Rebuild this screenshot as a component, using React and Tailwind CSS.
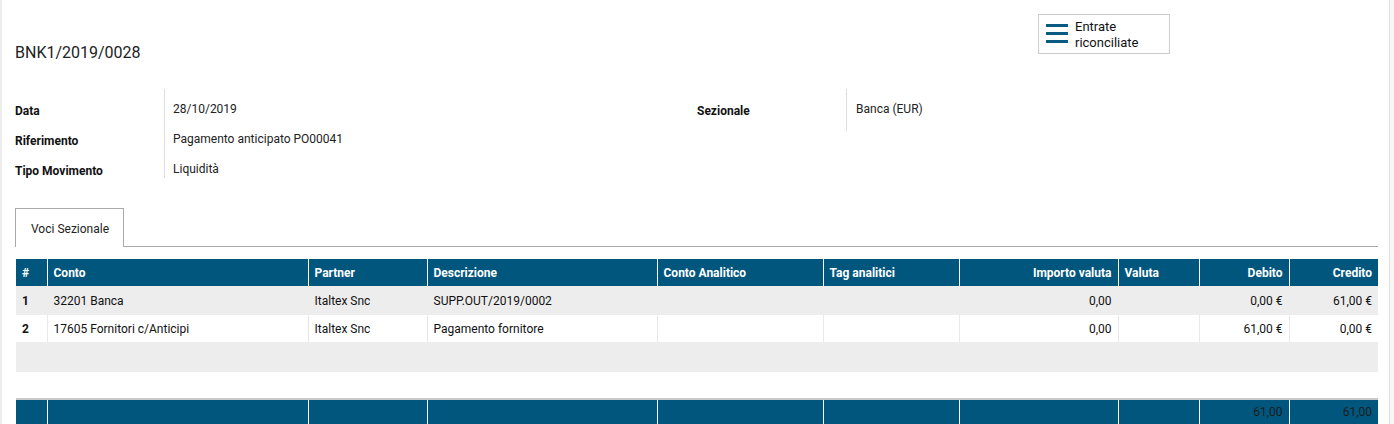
import React from "react";

const cols = [
  { label: "#", w: "w-[31px]", align: "text-left" },
  { label: "Conto", w: "w-[261px]", align: "text-left" },
  { label: "Partner", w: "w-[119px]", align: "text-left" },
  { label: "Descrizione", w: "w-[230px]", align: "text-left" },
  { label: "Conto Analitico", w: "w-[166px]", align: "text-left" },
  { label: "Tag analitici", w: "w-[136px]", align: "text-left" },
  { label: "Importo valuta", w: "w-[159px]", align: "text-right" },
  { label: "Valuta", w: "w-[81px]", align: "text-left" },
  { label: "Debito", w: "w-[90px]", align: "text-right" },
  { label: "Credito", w: "w-[89px]", align: "text-right" },
];

const rows = [
  ["1", "32201 Banca", "Italtex Snc", "SUPP.OUT/2019/0002", "", "", "0,00", "", "0,00 €", "61,00 €"],
  ["2", "17605 Fornitori c/Anticipi", "Italtex Snc", "Pagamento fornitore", "", "", "0,00", "", "61,00 €", "0,00 €"],
];

export default function App() {
  return (
    <div className="min-h-[424px] w-[1394px] flex bg-white font-['Roboto',sans-serif] text-[#222]">
      <div className="w-[2px] bg-[#ececec]" />
      <div className="flex-1 pl-[13px]">
        {/* header */}
        <div className="flex items-start pt-[14px] h-[54px]">
          <div className="w-[1023px] pt-[30px] text-[16px] leading-[18px] text-[#222]">BNK1/2019/0028</div>
          <button className="flex items-start gap-[7px] w-[132px] h-[40px] border border-[#cccccc] pl-[7px] pt-[4px] text-left">
            <svg width="22" height="19" viewBox="0 0 22 19" className="mt-[5px]">
              <rect x="0" y="0" width="22" height="3" fill="#0a5a82" />
              <rect x="0" y="8" width="22" height="3" fill="#0a5a82" />
              <rect x="0" y="16" width="22" height="3" fill="#0a5a82" />
            </svg>
            <span className="text-[13px] leading-[16px] text-[#111]">
              Entrate
              <br />
              riconciliate
            </span>
          </button>
        </div>

        {/* fields */}
        <div className="flex mt-[35px]">
          <div className="w-[682px]">
            <div className="flex">
              <div className="w-[149px]">
                <div className="h-[30px] pt-[15px] font-bold text-[12px] leading-[14px] text-[#111]">Data</div>
                <div className="h-[30px] pt-[15px] font-bold text-[12px] leading-[14px] text-[#111]">Riferimento</div>
                <div className="h-[30px] pt-[15px] font-bold text-[12px] leading-[14px] text-[#111]">Tipo Movimento</div>
              </div>
              <div className="border-l border-[#ddd] pl-[8px] h-[89px]">
                <div className="h-[30px] pt-[13px] text-[12px] leading-[14px]">28/10/2019</div>
                <div className="h-[30px] pt-[13px] text-[12px] leading-[14px]">Pagamento anticipato PO00041</div>
                <div className="h-[29px] pt-[13px] text-[12px] leading-[14px]">Liquidità</div>
              </div>
            </div>
          </div>
          <div className="flex h-[42px]">
            <div className="w-[149px] pt-[15px] font-bold text-[12px] leading-[14px] text-[#111]">Sezionale</div>
            <div className="border-l border-[#ddd] pl-[9px] pt-[13px] text-[12px] leading-[14px]">Banca (EUR)</div>
          </div>
        </div>

        {/* tabs */}
        <div className="w-[1363px] mt-[29px] flex border-b border-[#aaa]">
          <div className="w-[109px] h-[39px] -mb-px border border-b-0 border-[#aaa] bg-white pl-[15px] pt-[13px] text-[12px] leading-[14px] text-[#222]">
            Voci Sezionale
          </div>
        </div>

        {/* table */}
        <table className="mt-[12px] ml-px w-[1362px] table-fixed border-collapse text-[12px]">
          <thead>
            <tr className="h-[27px] bg-[#01567e] text-white">
              {cols.map((c, i) => (
                <th
                  key={i}
                  className={`${c.w} ${c.align} font-bold px-[6px] leading-[14px] ${i > 0 ? "border-l border-white" : ""}`}
                >
                  {c.label}
                </th>
              ))}
            </tr>
          </thead>
          <tbody>
            {rows.map((r, ri) => (
              <tr key={ri} className={ri === 0 ? "h-[29px] bg-[#ededed]" : "h-[27px] bg-white"}>
                {r.map((v, ci) => (
                  <td
                    key={ci}
                    className={`${cols[ci].align} px-[6px] leading-[14px] text-[#111] ${ci === 0 ? "font-bold" : ""} ${
                      ci > 0 ? (ri === 0 ? "border-l border-[#ededed]" : "border-l border-[#e8e8e8]") : ""
                    }`}
                  >
                    {v}
                  </td>
                ))}
              </tr>
            ))}
            <tr className="h-[30px] bg-[#ededed]">
              <td colSpan={10} />
            </tr>
            <tr className="h-[27px] bg-white">
              <td colSpan={10} />
            </tr>
          </tbody>
          <tfoot>
            <tr className="h-[25px] bg-[#01567e] border-t-2 border-[#c8c8c8]">
              {cols.map((c, i) => (
                <td
                  key={i}
                  className={`text-right px-[6px] text-[#1c1c1c] leading-[14px] ${i > 0 ? "border-l border-white" : ""}`}
                >
                  {i >= 8 ? "61,00" : ""}
                </td>
              ))}
            </tr>
          </tfoot>
        </table>
      </div>
      <div className="w-[5px] border-l border-[#e2e2e2] bg-[#f7f7f7]" />
    </div>
  );
}
